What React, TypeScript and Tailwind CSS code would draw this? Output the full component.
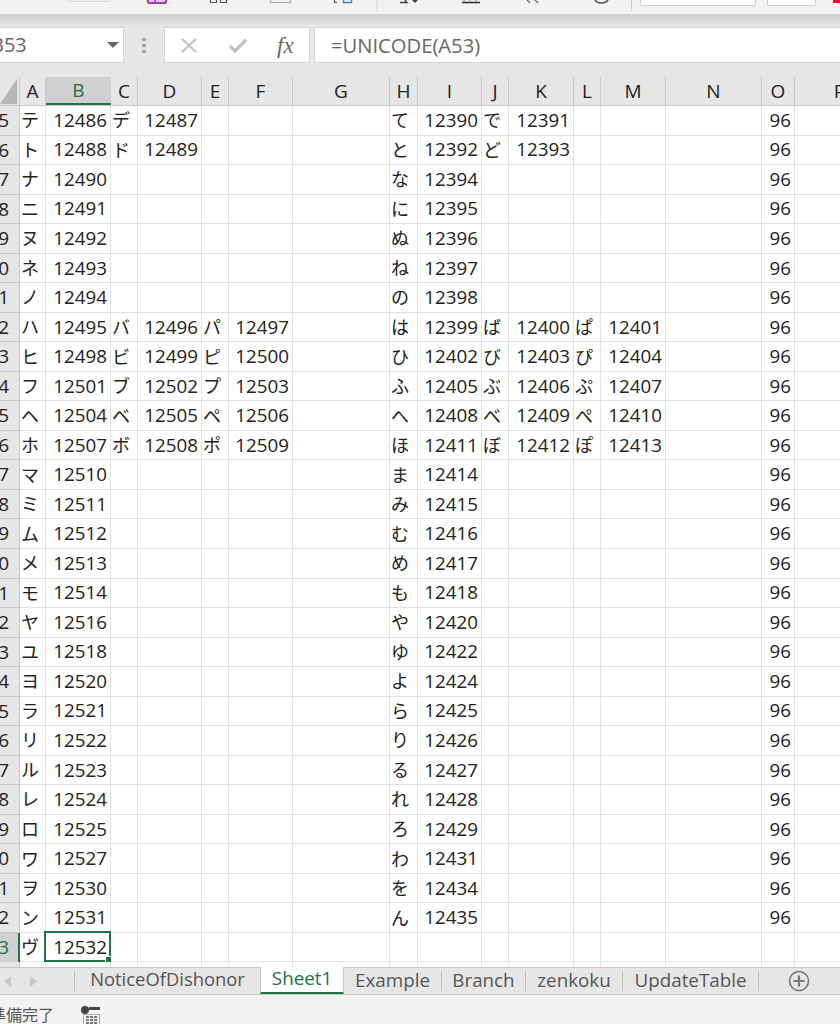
import React from "react";

const cols: [string, number][] = [
  ["A", 26], ["B", 65], ["C", 27], ["D", 64], ["E", 27], ["F", 64], ["G", 97], ["H", 28],
  ["I", 64], ["J", 27], ["K", 65], ["L", 27], ["M", 65], ["N", 96], ["O", 33], ["P", 90],
];
const kata = ["テ","ト","ナ","ニ","ヌ","ネ","ノ","ハ","ヒ","フ","ヘ","ホ","マ","ミ","ム","メ","モ","ヤ","ユ","ヨ","ラ","リ","ル","レ","ロ","ワ","ヲ","ン","ヴ",""];
const kcode = [12486,12488,12490,12491,12492,12493,12494,12495,12498,12501,12504,12507,12510,12511,12512,12513,12514,12516,12518,12520,12521,12522,12523,12524,12525,12527,12530,12531,12532,0];
const hira = ["て","と","な","に","ぬ","ね","の","は","ひ","ふ","へ","ほ","ま","み","む","め","も","や","ゆ","よ","ら","り","る","れ","ろ","わ","を","ん","",""];
const hcode = [12390,12392,12394,12395,12396,12397,12398,12399,12402,12405,12408,12411,12414,12415,12416,12417,12418,12420,12422,12424,12425,12426,12427,12428,12429,12431,12434,12435,0,0];
const extra: Record<number, string[]> = {
  0: ["デ","12487","","","で","12391","",""],
  1: ["ド","12489","","","ど","12393","",""],
  7: ["バ","12496","パ","12497","ば","12400","ぱ","12401"],
  8: ["ビ","12499","ピ","12500","び","12403","ぴ","12404"],
  9: ["ブ","12502","プ","12503","ぶ","12406","ぷ","12407"],
  10: ["ベ","12505","ペ","12506","べ","12409","ぺ","12410"],
  11: ["ボ","12508","ポ","12509","ぼ","12412","ぽ","12413"],
};

function rowCells(i: number): Record<string, string> {
  const e = extra[i] ?? ["","","","","","","",""];
  return {
    A: kata[i], B: kcode[i] ? String(kcode[i]) : "", C: e[0], D: e[1], E: e[2], F: e[3],
    H: hira[i], I: hcode[i] ? String(hcode[i]) : "", J: e[4], K: e[5], L: e[6], M: e[7],
    O: i < 28 ? "96" : "",
  };
}
const numeric = new Set(["B","D","F","I","K","M","O"]);

export default function App() {
  return (
    <div className="w-[840px] h-[1024px] overflow-hidden flex flex-col bg-white text-[#222] font-['Open_Sans','Noto_Sans_CJK_JP',sans-serif]">
      {/* ribbon remnant */}
      <div className="h-[14px] shrink-0 bg-[#f3f2f1]">
        <svg className="block" width="840" height="14" viewBox="0 0 840 14" fill="none">
          <path d="M67 0c1 1 2 1.500 4 1.500h35c2 0 3-.5 4-1.500" stroke="#d4d4d4" />
          <path d="M147.500 0l1 3h17l1-3" fill="#e3c6ea" stroke="#a33ab0" strokeWidth="2" />
          <path d="M155 0v3" stroke="#a33ab0" strokeWidth="1.500" />
          <path d="M210.500 0v2.500h6V0M220.500 0v2.500h6V0" stroke="#555" strokeWidth="1.200" />
          <path d="M270.500 0v2.500h20V0" stroke="#aaa" strokeWidth="1.200" />
          <path d="M334.500 2.500h2.500M334.500 0v2.500" stroke="#555" strokeWidth="1.200" />
          <path d="M343.500 0v2.500h8V0" stroke="#2b88d8" strokeWidth="1.400" />
          <path d="M377 0v11" stroke="#d2d0ce" />
          <path d="M400 2.500h7l-2-2.500" stroke="#444" strokeWidth="1.400" />
          <path d="M412 0l3 3 3-3z" fill="#444" />
          <path d="M462 2.500h18" stroke="#333" strokeWidth="1.600" />
          <path d="M464 0v1M470 0v1M476 0v1" stroke="#777" />
          <path d="M527 0l3 3M535 0l3 3" stroke="#666" strokeWidth="1.300" />
          <path d="M595 0c2 4 10 4 13 0" stroke="#555" strokeWidth="1.500" />
          <path d="M631.500 0v11" stroke="#d2d0ce" />
          <path d="M640.500 0v5.500h115V0" fill="#fff" stroke="#d2d0ce" />
          <path d="M767.500 0v5.500h48V0" fill="#fff" stroke="#d2d0ce" />
          <rect x="833" y="0" width="7" height="3" fill="#e81123" />
        </svg>
      </div>

      {/* formula bar */}
      <div className="h-[63px] shrink-0 flex flex-col bg-[#e6e6e6]">
        <div className="h-[13px] shrink-0 bg-linear-to-b from-[#cfcfcf] to-[#e6e6e6]" />
        <div className="h-[36px] shrink-0 flex">
          <div className="w-[124px] shrink-0 bg-white border-t border-r border-b border-[#d4d4d4] flex items-center justify-between pr-[4px]">
            <span className="text-[20px] leading-none text-[#666] -ml-[9px]">B53</span>
            <svg width="12" height="6" viewBox="0 0 12 6"><path d="M0 0h12L6 6z" fill="#666" /></svg>
          </div>
          <div className="w-[40px] shrink-0 flex items-center justify-center">
            <svg width="4" height="15" viewBox="0 0 4 15" fill="#a6a6a6"><rect width="4" height="3" y="0" /><rect width="4" height="3" y="6" /><rect width="4" height="3" y="12" /></svg>
          </div>
          <div className="w-[146px] shrink-0 bg-white border border-[#d4d4d4] flex items-center">
            <svg className="ml-[16px]" width="16" height="15" viewBox="0 0 16 15" fill="none" stroke="#c0c0c0" strokeWidth="2"><path d="M1 1l14 13M15 1L1 14" /></svg>
            <svg className="ml-[32px]" width="18" height="15" viewBox="0 0 18 15" fill="none" stroke="#c0c0c0" strokeWidth="3.200"><path d="M1 8l5 5L17 2" /></svg>
            <span className="ml-[30px] text-[23px] leading-none italic text-[#666] font-['Liberation_Serif',serif]">fx</span>
          </div>
          <div className="ml-[4px] flex-1 bg-white border-t border-l border-b border-[#d4d4d4] flex items-center pl-[16px] text-[20.200px] leading-none text-[#666]">
            =UNICODE(A53)
          </div>
        </div>
      </div>

      {/* column header */}
      <div className="h-[29px] shrink-0 flex bg-[#e6e6e6] border-b border-[#c8c8c8]">
        <div className="w-[20px] shrink-0 flex items-end justify-end pr-[2px] pb-[1px] border-r border-[#c8c8c8]">
          <svg width="17" height="25" viewBox="0 0 17 25"><path d="M17 0v25H0z" fill="#b7b7b7" /></svg>
        </div>
        {cols.map(([c, w]) => (
          <div
            key={c}
            style={{ width: w }}
            className={c === "B"
              ? "shrink-0 flex items-center justify-center text-[19px] text-[#217346] bg-[#d0d0d0] border-b-2 border-[#217346]"
              : "shrink-0 flex items-center justify-center text-[19px] text-[#222] border-r border-[#c8c8c8]"}
          >
            {c}
          </div>
        ))}
      </div>

      {/* grid */}
      <div className="h-[861px] shrink-0 overflow-hidden">
        {kata.map((_, i) => {
          const cells = rowCells(i);
          const num = i < 29 ? String((25 + i) % 10) : "";
          return (
            <div key={i} className="flex h-[29.54px] box-border">
              <div className={i === 28
                ? "w-[20px] shrink-0 bg-[#d0d0d0] border-r-2 border-[#217346] flex items-center justify-end pr-[9px] text-[19px] text-[#217346] overflow-hidden"
                : "w-[20px] shrink-0 bg-[#e6e6e6] border-r border-b border-[#c8c8c8] flex items-center justify-end pr-[10px] text-[19px] text-[#222] overflow-hidden"}>
                {num}
              </div>
              {cols.map(([c, w]) => {
                const selected = i === 28 && c === "B";
                const isNum = numeric.has(c);
                return (
                  <div
                    key={c}
                    style={{ width: w }}
                    className={`shrink-0 border-r border-b border-[#e1e1e1] flex items-center leading-none whitespace-nowrap ${isNum ? "justify-end pr-[3px] text-[18.800px]" : "justify-start pl-[1px] text-[18px]"} ${selected ? "relative" : ""}`}
                  >
                    {cells[c]}
                    {selected && (
                      <span className="absolute -left-[2px] -top-[2px] -right-px -bottom-px border-2 border-[#217346]">
                        <span className="absolute -right-[3px] -bottom-[3px] w-[5px] h-[5px] bg-[#217346] border border-white box-content" />
                      </span>
                    )}
                  </div>
                );
              })}
            </div>
          );
        })}
      </div>

      {/* sheet tabs */}
      <div className="h-[28px] shrink-0 bg-[#e6e6e6] border-t border-b border-[#c8c8c8] flex items-stretch text-[18.800px] text-[#555]">
        <div className="w-[75px] shrink-0 flex items-center pl-[4px] gap-[19px] border-r border-[#c0c0c0] my-[3px]">
          <svg width="7" height="11" viewBox="0 0 7 11"><path d="M7 0v11L0 5.500z" fill="#c8c8c8" /></svg>
          <svg width="7" height="11" viewBox="0 0 7 11"><path d="M0 0v11L7 5.500z" fill="#c8c8c8" /></svg>
        </div>
        <div className="w-[185px] shrink-0 flex items-center justify-center pb-[4px] text-[18.400px]">NoticeOfDishonor</div>
        <div className="w-[84px] shrink-0 -mt-px bg-white border-x border-[#c8c8c8] border-b-2 border-b-[#217346] text-[#217346] flex items-center justify-center pb-[2px]">Sheet1</div>
        <div className="w-[98px] shrink-0 flex items-center justify-center border-r border-[#c0c0c0] my-[3px] pb-[1px]">Example</div>
        <div className="w-[84px] shrink-0 flex items-center justify-center border-r border-[#c0c0c0] my-[3px] pb-[1px]">Branch</div>
        <div className="w-[97px] shrink-0 flex items-center justify-center border-r border-[#c0c0c0] my-[3px] pb-[1px]">zenkoku</div>
        <div className="w-[136px] shrink-0 flex items-center justify-center border-r border-[#c0c0c0] my-[3px] pb-[1px]">UpdateTable</div>
        <div className="flex-1 flex items-center justify-center -ml-[1px]">
          <svg width="22" height="22" viewBox="0 0 22 22" fill="none" stroke="#777" strokeWidth="1.600"><circle cx="11" cy="11" r="9.500" /><path d="M11 5.500v11M5.500 11h11" strokeWidth="2.200" /></svg>
        </div>
      </div>

      {/* status bar */}
      <div className="flex-1 bg-[#f3f2f1] flex items-start pt-[11px] text-[16px] leading-none text-[#555]">
        <span className="-ml-[10px] font-['Noto_Sans_CJK_JP',sans-serif]">準備完了</span>
        <svg className="ml-[26px]" width="21" height="18" viewBox="0 0 21 18">
          <circle cx="5" cy="4" r="4" fill="#444" />
          <rect x="9" y="1" width="11" height="3" fill="#444" />
          <path d="M3.500 8.500h16v10h-16z" fill="none" stroke="#aaa" />
          <path d="M6 10h3v2H6zM10 10h3v2h-3zM14 10h3v2h-3zM6 13h3v2H6zM10 13h3v2h-3zM14 13h3v2h-3zM6 16h3v2H6zM10 16h3v2h-3zM14 16h3v2h-3z" fill="#777" />
        </svg>
      </div>
    </div>
  );
}
